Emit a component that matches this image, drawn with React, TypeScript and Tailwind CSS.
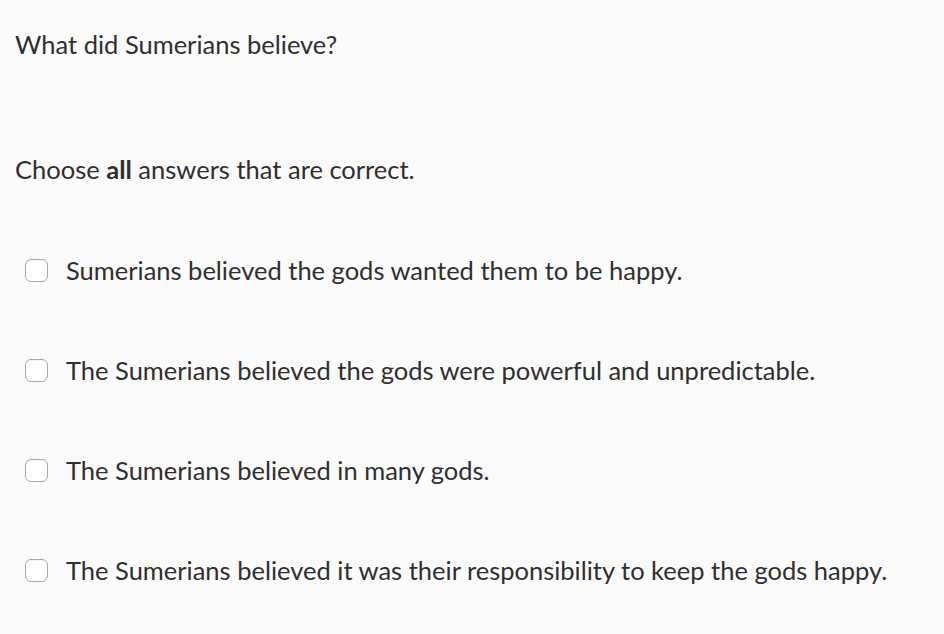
import React from 'react';

const OPTIONS = [
  'Sumerians believed the gods wanted them to be happy.',
  'The Sumerians believed the gods were powerful and unpredictable.',
  'The Sumerians believed in many gods.',
  'The Sumerians believed it was their responsibility to keep the gods happy.',
];

export default function App() {
  return (
    <div className="min-h-[634px] w-[944px] bg-[#fafafa] text-[#2f2f2f] font-['Lato',sans-serif] text-[25.5px] leading-[30px]">
      <div className="pl-[15px] pt-[29px]">
        <p>What did Sumerians believe?</p>
        <p className="mt-[95px]">
          Choose <b className="font-bold">all</b> answers that are correct.
        </p>
      </div>
      <div className="mt-[71px] flex flex-col gap-[70px] pl-[25px]">
        {OPTIONS.map(text => (
          <label key={text} className="flex items-center gap-[18px]">
            <span className="h-[23px] w-[23px] shrink-0 rounded-[6px] border border-[#a8a8a8] bg-white shadow-[inset_0_1px_1px_rgba(0,0,0,0.05)]" />
            <span>{text}</span>
          </label>
        ))}
      </div>
    </div>
  );
}
